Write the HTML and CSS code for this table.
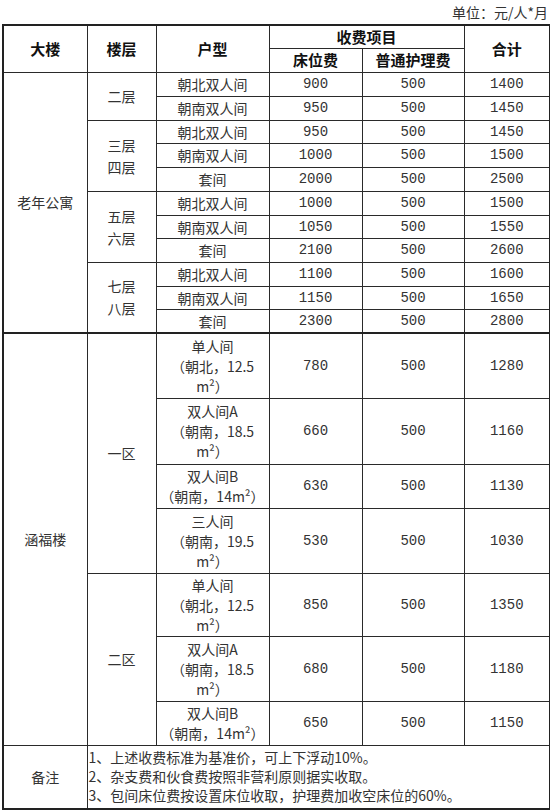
FILE: index.html
```html
<!DOCTYPE html>
<html lang="zh-CN">
<head>
<meta charset="utf-8">
<title>收费标准</title>
<link rel="stylesheet" href="styles.css">
</head>
<body>
<div class="unit">单位：元/人*月</div>
<table class="fee">
  <colgroup>
    <col class="c1"><col class="c2"><col class="c3"><col class="c4"><col class="c5"><col class="c6">
  </colgroup>
  <thead>
    <tr class="h1"><th rowspan="2">大楼</th><th rowspan="2">楼层</th><th rowspan="2">户型</th><th colspan="2">收费项目</th><th rowspan="2">合计</th></tr>
    <tr class="h2"><th>床位费</th><th>普通护理费</th></tr>
  </thead>
  <tbody>
    <tr class="r24"><td rowspan="11">老年公寓</td><td rowspan="2" class="floor">二层</td><td>朝北双人间</td><td class="num">900</td><td class="num">500</td><td class="num">1400</td></tr>
    <tr class="r24"><td>朝南双人间</td><td class="num">950</td><td class="num">500</td><td class="num">1450</td></tr>
    <tr class="r23"><td rowspan="3" class="floor">三层<br>四层</td><td>朝北双人间</td><td class="num">950</td><td class="num">500</td><td class="num">1450</td></tr>
    <tr class="r24"><td>朝南双人间</td><td class="num">1000</td><td class="num">500</td><td class="num">1500</td></tr>
    <tr class="r24"><td>套间</td><td class="num">2000</td><td class="num">500</td><td class="num">2500</td></tr>
    <tr class="r24"><td rowspan="3" class="floor">五层<br>六层</td><td>朝北双人间</td><td class="num">1000</td><td class="num">500</td><td class="num">1500</td></tr>
    <tr class="r23"><td>朝南双人间</td><td class="num">1050</td><td class="num">500</td><td class="num">1550</td></tr>
    <tr class="r24"><td>套间</td><td class="num">2100</td><td class="num">500</td><td class="num">2600</td></tr>
    <tr class="r24"><td rowspan="3" class="floor">七层<br>八层</td><td>朝北双人间</td><td class="num">1100</td><td class="num">500</td><td class="num">1600</td></tr>
    <tr class="r23"><td>朝南双人间</td><td class="num">1150</td><td class="num">500</td><td class="num">1650</td></tr>
    <tr class="r24"><td>套间</td><td class="num">2300</td><td class="num">500</td><td class="num">2800</td></tr>
    <tr class="r65 sep"><td rowspan="7">涵福楼</td><td rowspan="4">一区</td><td class="room">单人间<br>（朝北，12.5<br>m²）</td><td class="num">780</td><td class="num">500</td><td class="num">1280</td></tr>
    <tr class="r66"><td class="room">双人间A<br>（朝南，18.5<br>m²）</td><td class="num">660</td><td class="num">500</td><td class="num">1160</td></tr>
    <tr class="r44"><td class="room">双人间B<br>（朝南，14m²）</td><td class="num">630</td><td class="num">500</td><td class="num">1130</td></tr>
    <tr class="r65"><td class="room">三人间<br>（朝南，19.5<br>m²）</td><td class="num">530</td><td class="num">500</td><td class="num">1030</td></tr>
    <tr class="r63"><td rowspan="3">二区</td><td class="room">单人间<br>（朝北，12.5<br>m²）</td><td class="num">850</td><td class="num">500</td><td class="num">1350</td></tr>
    <tr class="r65"><td class="room">双人间A<br>（朝南，18.5<br>m²）</td><td class="num">680</td><td class="num">500</td><td class="num">1180</td></tr>
    <tr class="r44"><td class="room">双人间B<br>（朝南，14m²）</td><td class="num">650</td><td class="num">500</td><td class="num">1150</td></tr>
    <tr class="r64"><td>备注</td><td colspan="5" class="notes">1、上述收费标准为基准价，可上下浮动10%。<br>2、杂支费和伙食费按照非营利原则据实收取。<br>3、包间床位费按设置床位收取，护理费加收空床位的60%。</td></tr>
  </tbody>
</table>
</body>
</html>
```
FILE: styles.css
```css
html, body {
  margin: 0;
  padding: 0;
  background: #ffffff;
}
body {
  width: 550px;
  font-family: "Noto Sans CJK SC", "Noto Sans", sans-serif;
  color: #333333;
}
.unit {
  height: 24px;
  line-height: 24px;
  font-size: 14px;
  text-align: right;
  padding-right: 2px;
  color: #333333;
}
.fee {
  border-collapse: collapse;
  table-layout: fixed;
  width: 547px;
  margin-left: 2px;
  border: 2px solid #222222;
}
.c1 { width: 84px; }
.c2 { width: 69px; }
.c3 { width: 113px; }
.c4 { width: 93px; }
.c5 { width: 102px; }
.c6 { width: 86px; }
.fee th, .fee td {
  border: 1px solid #2a2a2a;
  padding: 0;
  text-align: center;
  vertical-align: middle;
  font-size: 14px;
  line-height: 20px;
  white-space: nowrap;
  overflow: hidden;
  font-weight: 400;
}
.fee th {
  font-size: 15px;
  font-weight: 700;
  color: #111111;
}
.h1 { height: 23px; }
.h2 { height: 24px; }
.r23 { height: 23px; }
.r24 { height: 24px; }
.r44 { height: 44px; }
.r63 { height: 63px; }
.r64 { height: 64px; }
.r65 { height: 65px; }
.r66 { height: 66px; }
.fee .sep td { border-top: 2px solid #222222; }
.fee .floor { line-height: 22px; }
.fee .num {
  font-family: "Liberation Mono", "Noto Sans CJK SC", monospace;
  font-size: 14px;
  color: #333333;
}
.fee .room { line-height: 20px; }
.fee .notes {
  text-align: left;
  line-height: 19px;
  padding-left: 1px;
}
```
